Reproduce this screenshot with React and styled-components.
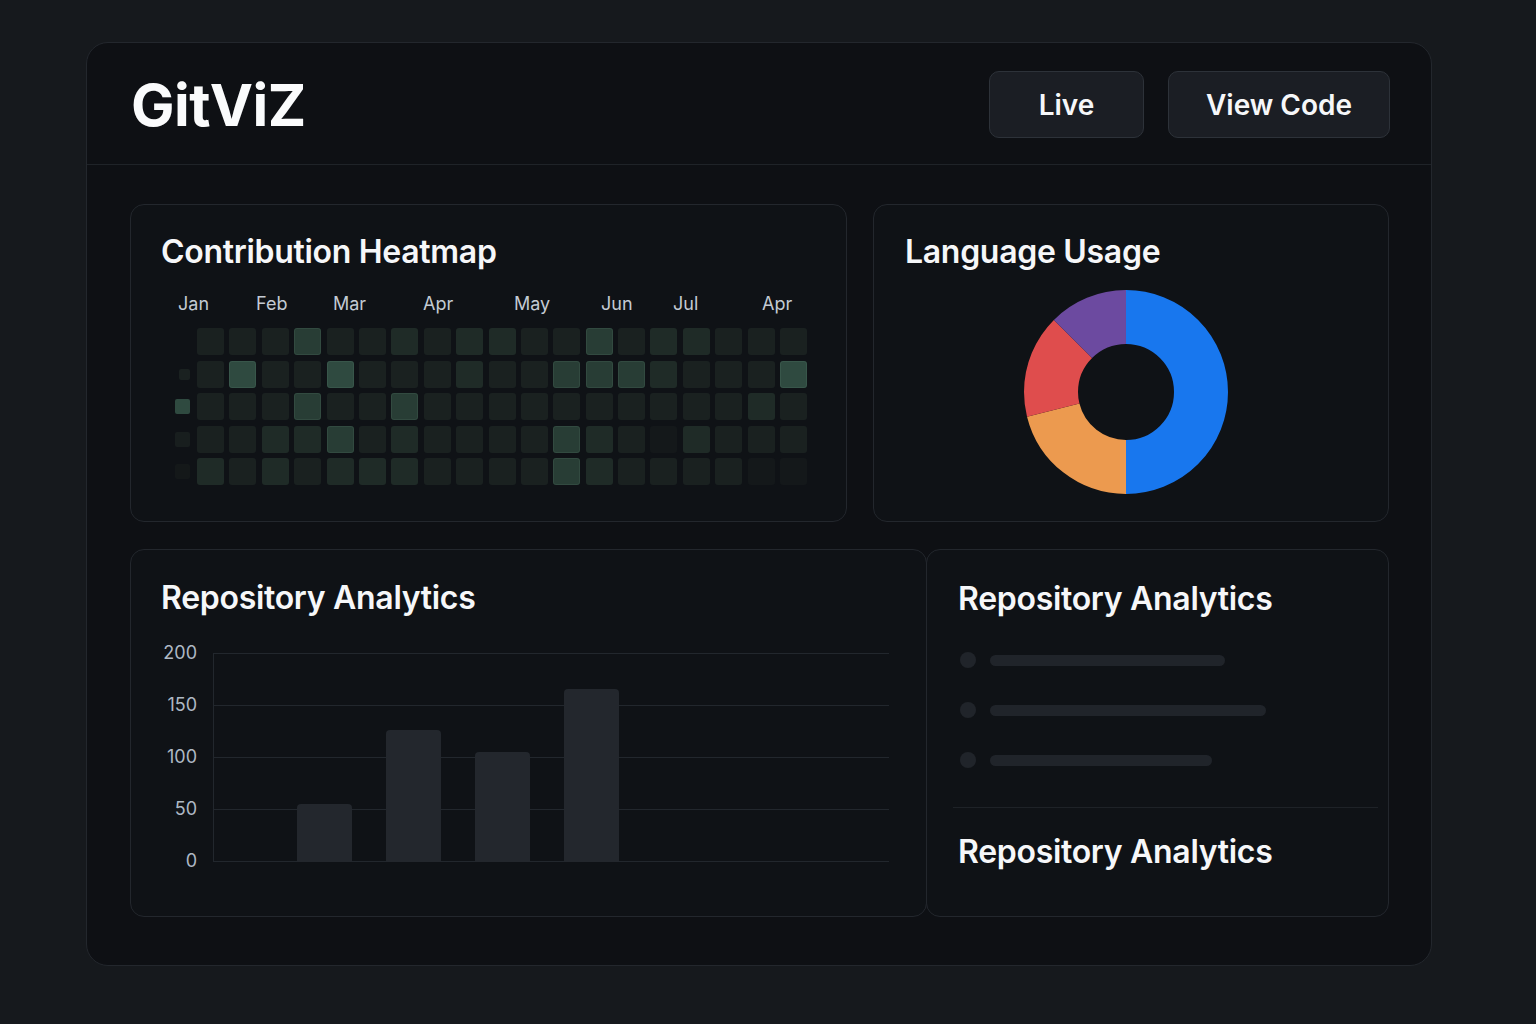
import styled, { createGlobalStyle } from "styled-components"

const GlobalStyle = createGlobalStyle`
    html, body {
        margin : 0;
        padding : 0;
        background : #16191d;
    }
    body {
        font-family : Inter, "Noto Sans", "Liberation Sans", sans-serif;
        color : #f4f6f8;
    }
    * { box-sizing : border-box; }
`

const Shell = styled.div`
    width : 1346px;
    height : 924px;
    margin : 42px 0 0 86px;
    background : #0e1014;
    border : 1px solid #23272d;
    border-radius : 22px;
    display : flex;
    flex-direction : column;
`
const Header = styled.header`
    height : 122px;
    flex-shrink : 0;
    display : flex;
    align-items : center;
    justify-content : space-between;
    padding : 2px 41px 0 44px;
    border-bottom : 1px solid #1f2328;
`
const Logo = styled.h1`
    margin : 0;
    font-size : 58px;
    font-weight : 700;
    letter-spacing : -0.5px;
    color : #fafbfc;
`
const Actions = styled.div`
    display : flex;
    gap : 24px;
`
const Button = styled.button`
    width : ${p => p.$w}px;
    height : 67px;
    font-family : inherit;
    font-size : 28px;
    font-weight : 600;
    color : #f6f7f9;
    background : #1b1e24;
    border : 1px solid #2d3239;
    border-radius : 10px;
    cursor : pointer;
`
const Body = styled.main`
    flex : 1;
    display : flex;
    flex-direction : column;
    gap : 27px;
    padding : 39px 42px 0 43px;
`
const Row = styled.div`
    display : grid;
    grid-template-columns : ${p => p.$cols};
    gap : ${p => p.$gap}px;
    height : ${p => p.$h}px;
`
const Card = styled.section`
    background : #0f1216;
    border : 1px solid #23272d;
    border-radius : 14px;
    padding : ${p => p.$pad};
    display : flex;
    flex-direction : column;
    overflow : hidden;
    ${p => p.$joined && "margin-left : -1px;"}
`
const Title = styled.h2`
    margin : 0;
    font-size : 32px;
    line-height : 38px;
    font-weight : 600;
    letter-spacing : -0.3px;
    color : #f6f7f9;
`

/* heatmap */
const Months = styled.div`
    display : flex;
    margin : 22px 0 0 17px;
    height : 22px;
`
const Month = styled.span`
    width : ${p => p.$w ? p.$w + "px" : "auto"};
    font-size : 18px;
    line-height : 22px;
    color : #c3cad3;
`
const HeatArea = styled.div`
    display : flex;
    gap : 7px;
    margin : 13px 0 0 13px;
`
const Legend = styled.div`
    width : 16px;
    display : grid;
    grid-template-rows : repeat(5, 27px);
    row-gap : 5.5px;
    justify-items : end;
    align-items : center;
`
const LegendDot = styled.span`
    width : ${p => p.$s}px;
    height : ${p => p.$s}px;
    border-radius : 2px;
    background : ${p => p.$c};
`
const Cells = styled.div`
    display : grid;
    grid-template-columns : repeat(19, 27px);
    grid-template-rows : repeat(5, 27px);
    gap : 5.5px 5.4px;
`
const shades = ["#14181a", "#1a2120", "#1f2b27", "#283d35", "#2f4a40"]
const Cell = styled.span`
    border-radius : 3px;
    background : ${p => shades[p.$l]};
    box-shadow : ${p => p.$l >= 3 ? "inset 0 0 0 1px rgba(120,170,150,0.12)" : "none"};
`

/* donut */
const DonutWrap = styled.div`
    display : flex;
    justify-content : center;
    padding-right : 10px;
    margin-top : 16px;
`

/* bar chart */
const Chart = styled.div`
    display : flex;
    gap : 16px;
    margin-top : 36px;
`
const YAxis = styled.div`
    width : 36px;
    margin-top : -11px;
    display : flex;
    flex-direction : column;
    align-items : flex-end;
    gap : 30px;
`
const Tick = styled.span`
    font-size : 18px;
    line-height : 22px;
    color : #aeb8c4;
`
const Plot = styled.div`
    width : 676px;
    height : 209px;
    border-left : 1px solid #22272d;
    background : repeating-linear-gradient(to bottom, #22272d 0 1px, transparent 1px 52px);
    display : flex;
    align-items : flex-end;
    gap : 34px;
    padding : 0 0 0 83px;
`
const Bar = styled.div`
    width : 55px;
    height : ${p => p.$h}px;
    background : #23272d;
    border-radius : 4px 4px 0 0;
`

/* skeleton list */
const List = styled.div`
    display : flex;
    flex-direction : column;
    gap : 34px;
    margin-top : 34px;
`
const Item = styled.div`
    display : flex;
    align-items : center;
    gap : 14px;
    padding-left : 2px;
`
const Dot = styled.span`
    width : 16px;
    height : 16px;
    border-radius : 50%;
    background : #20242a;
`
const Line = styled.span`
    width : ${p => p.$w}px;
    height : 11px;
    border-radius : 6px;
    background : #20242a;
`
const Divider = styled.hr`
    border : none;
    border-top : 1px solid #1e2227;
    margin : 39px -10px 25px -5px;
`

const heat = [
    [1,1,1,3,1,1,2,1,2,2,1,1,3,1,2,2,1,1,1],
    [1,4,1,1,4,1,1,1,2,1,1,3,3,3,2,1,1,1,4],
    [1,1,1,3,1,1,3,1,1,1,1,1,1,1,1,1,1,2,1],
    [1,1,2,2,3,1,2,1,1,1,1,3,2,1,0,2,1,1,1],
    [2,1,2,1,2,2,2,1,1,1,1,3,2,1,1,1,1,0,0],
]
const months = [["Jan",78],["Feb",77],["Mar",90],["Apr",91],["May",87],["Jun",72],["Jul",89],["Apr"]]
const legend = [null, [11,"#1a2120"], [15,"#2f4a40"], [15,"#181e1e"], [15,"#141819"]]
const langs = [
    { c : "#1877ee", v : 50 },
    { c : "#ec9a4f", v : 21.1 },
    { c : "#df4d4d", v : 16.4 },
    { c : "#6c4aa0", v : 12.5 },
]

const Donut = () => {
    let acc = 0
    return (
        <svg width="210" height="210" viewBox="0 0 210 210">
            <g transform="rotate(-90 105 105)">
                {langs.map((l, i) => {
                    const el = (
                        <circle key={i} cx="105" cy="105" r="75" fill="none" stroke={l.c} strokeWidth="54"
                            pathLength="100" strokeDasharray={`${l.v} ${100 - l.v}`} strokeDashoffset={-acc} />
                    )
                    acc += l.v
                    return el
                })}
            </g>
        </svg>
    )
}

const App = () => {
  return (
    <>
    <GlobalStyle />
    <Shell>
      <Header>
        <Logo>GitViZ</Logo>
        <Actions>
            <Button $w={155}>Live</Button>
            <Button $w={222}>View Code</Button>
        </Actions>
      </Header>
      <Body>
        <Row $cols="717px 1fr" $gap={26} $h={318}>
            <Card $pad="28px 30px 0">
                <Title>Contribution Heatmap</Title>
                <Months>
                    {months.map(([m, w], i) => <Month key={i} $w={w}>{m}</Month>)}
                </Months>
                <HeatArea>
                    <Legend>
                        {legend.map((l, i) => l ? <LegendDot key={i} $s={l[0]} $c={l[1]} /> : <span key={i} />)}
                    </Legend>
                    <Cells>
                        {heat.map((row, r) => row.map((l, c) => <Cell key={r + "-" + c} $l={l} />))}
                    </Cells>
                </HeatArea>
            </Card>
            <Card $pad="28px 31px 0">
                <Title>Language Usage</Title>
                <DonutWrap><Donut /></DonutWrap>
            </Card>
        </Row>
        <Row $cols="797px 1fr" $gap={0} $h={368}>
            <Card $pad="29px 30px 0">
                <Title>Repository Analytics</Title>
                <Chart>
                    <YAxis>
                        {[200,150,100,50,0].map(t => <Tick key={t}>{t}</Tick>)}
                    </YAxis>
                    <Plot>
                        <Bar $h={58} />
                        <Bar $h={132} />
                        <Bar $h={110} />
                        <Bar $h={173} />
                    </Plot>
                </Chart>
            </Card>
            <Card $joined $pad="30px 20px 0 31px">
                <Title>Repository Analytics</Title>
                <List>
                    <Item><Dot /><Line $w={235} /></Item>
                    <Item><Dot /><Line $w={276} /></Item>
                    <Item><Dot /><Line $w={222} /></Item>
                </List>
                <Divider />
                <Title>Repository Analytics</Title>
            </Card>
        </Row>
      </Body>
    </Shell>
    </>
  )
}

export default App
